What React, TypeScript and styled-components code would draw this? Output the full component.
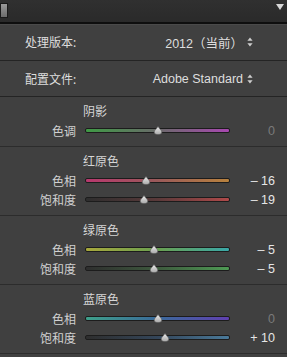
import React from "react";
import styled, { createGlobalStyle } from "styled-components";

const Global = createGlobalStyle`
  html, body { margin: 0; padding: 0; }
  body {
    width: 287px; height: 357px; overflow: hidden;
    background: #3f3f3f;
    font-family: "Noto Sans", "Noto Sans CJK SC", sans-serif;
  }
`;

const Panel = styled.div`
  width: 287px;
  height: 357px;
  background: #404040;
  display: flex;
  flex-direction: column;
  overflow: hidden;
`;

const TopBar = styled.div`
  position: relative;
  height: 22px;
  flex: none;
  background: linear-gradient(#303030, #2a2a2a);
  border-bottom: 2px solid #0e0e0e;
  box-shadow: 0 1px 0 #4a4a4a;
`;

const ScrollThumb = styled.div`
  position: absolute;
  left: 0;
  top: 3px;
  width: 6px;
  height: 13px;
  background: linear-gradient(#9a9a9a, #6c6c6c);
  border: 1px solid #1a1a1a;
`;

const Caret = styled.div`
  position: absolute;
  right: 3px;
  top: 4px;
  width: 0;
  height: 0;
  border-left: 4px solid transparent;
  border-right: 4px solid transparent;
  border-top: 6px solid #d8d8d8;
`;

const SettingRow = styled.div<{ $h: number }>`
  height: ${(p) => p.$h}px;
  flex: none;
  display: flex;
  align-items: center;
  justify-content: space-between;
  padding: 0 34px 0 25px;
  border-bottom: 1px solid #242424;
  color: #dedede;
  font-size: 12px;
`;

const SettingLabel = styled.span``;

const SettingValue = styled.span`
  display: flex;
  align-items: center;
  gap: 4px;
  font-family: "Liberation Sans", "Noto Sans CJK SC", sans-serif;
  font-size: 12.5px;
`;

const Section = styled.div`
  flex: none;
  padding: 6px 0 6px;
  border-bottom: 1px solid #2c2c2c;
`;

const Title = styled.div`
  height: 18px;
  line-height: 18px;
  padding-left: 83px;
  color: #d6d6d6;
  font-size: 12px;
`;

const Row = styled.div`
  height: 19px;
  display: grid;
  grid-template-columns: 76px 145px 36px;
  column-gap: 9px;
  align-items: center;
  font-size: 12px;
`;

const Label = styled.span`
  text-align: right;
  color: #d0d0d0;
`;

const Value = styled.span<{ $dim: boolean }>`
  text-align: right;
  color: ${(p) => (p.$dim ? "#7a7a7a" : "#e6e6e6")};
  font-family: "Liberation Sans", "Noto Sans", sans-serif;
  font-size: 12.5px;
  white-space: pre;
`;

const TrackWrap = styled.div`
  position: relative;
  height: 10px;
  display: flex;
  align-items: center;
`;

const Track = styled.div<{ $from: string; $mid: string; $to: string }>`
  width: 100%;
  height: 3px;
  border: 1px solid #1c1c1c;
  border-radius: 2px;
  background: linear-gradient(to right, ${(p) => p.$from}, ${(p) => p.$mid}, ${(p) => p.$to});
`;

const Thumb = styled.svg`
  position: absolute;
  top: 0px;
  width: 10px;
  height: 9px;
  margin-left: -5px;
`;

const Arrows = () => (
  <svg width="6" height="10" viewBox="0 0 6 10">
    <path d="M3 0.5 L5.6 3.8 L0.4 3.8 Z" fill="#cfcfcf" />
    <path d="M3 9.5 L5.6 6.2 L0.4 6.2 Z" fill="#cfcfcf" />
  </svg>
);

type SliderProps = {
  label: string;
  value: number;
  colors: [string, string, string];
};

const Slider = ({ label, value, colors }: SliderProps) => {
  const pct = 50 + value / 2;
  const text = value === 0 ? "0" : value > 0 ? `+ ${value}` : `– ${-value}`;
  return (
    <Row>
      <Label>{label}</Label>
      <TrackWrap>
        <Track $from={colors[0]} $mid={colors[1]} $to={colors[2]} />
        <Thumb viewBox="0 0 10 9" style={{ left: `${pct}%` }}>
          <defs>
            <linearGradient id="tg" x1="0" y1="0" x2="0" y2="1">
              <stop offset="0" stopColor="#ececec" />
              <stop offset="1" stopColor="#a8a8a8" />
            </linearGradient>
          </defs>
          <path
            d="M5 0.5 L8.6 5 Q9.5 8.6 5 8.6 Q0.5 8.6 1.4 5 Z"
            fill="url(#tg)"
            stroke="#5a5a5a"
            strokeWidth="0.6"
          />
        </Thumb>
      </TrackWrap>
      <Value $dim={value === 0}>{text}</Value>
    </Row>
  );
};

const sections: { title: string; rows: SliderProps[] }[] = [
  {
    title: "阴影",
    rows: [{ label: "色调", value: 0, colors: ["#3f9a45", "#6a6a6a", "#a848b0"] }],
  },
  {
    title: "红原色",
    rows: [
      { label: "色相", value: -16, colors: ["#b8386e", "#9a5a5a", "#b8823e"] },
      { label: "饱和度", value: -19, colors: ["#2e2e2e", "#5a3a3a", "#b04a4a"] },
    ],
  },
  {
    title: "绿原色",
    rows: [
      { label: "色相", value: -5, colors: ["#a8a83c", "#6aa050", "#3aa8a8"] },
      { label: "饱和度", value: -5, colors: ["#2e2e2e", "#3e5a3e", "#4e9a54"] },
    ],
  },
  {
    title: "蓝原色",
    rows: [
      { label: "色相", value: 0, colors: ["#3ea08a", "#3a6a9a", "#6040b0"] },
      { label: "饱和度", value: 10, colors: ["#2e2e2e", "#34465a", "#4a7a9a"] },
    ],
  },
];

export default function App() {
  return (
    <>
      <Global />
      <Panel>
        <TopBar>
          <ScrollThumb />
          <Caret />
        </TopBar>
        <SettingRow $h={36}>
          <SettingLabel>处理版本:</SettingLabel>
          <SettingValue>
            2012（当前）<Arrows />
          </SettingValue>
        </SettingRow>
        <SettingRow $h={35}>
          <SettingLabel>配置文件:</SettingLabel>
          <SettingValue>
            Adobe Standard <Arrows />
          </SettingValue>
        </SettingRow>
        {sections.map((s) => (
          <Section key={s.title}>
            <Title>{s.title}</Title>
            {s.rows.map((r) => (
              <Slider key={r.label} {...r} />
            ))}
          </Section>
        ))}
      </Panel>
    </>
  );
}
